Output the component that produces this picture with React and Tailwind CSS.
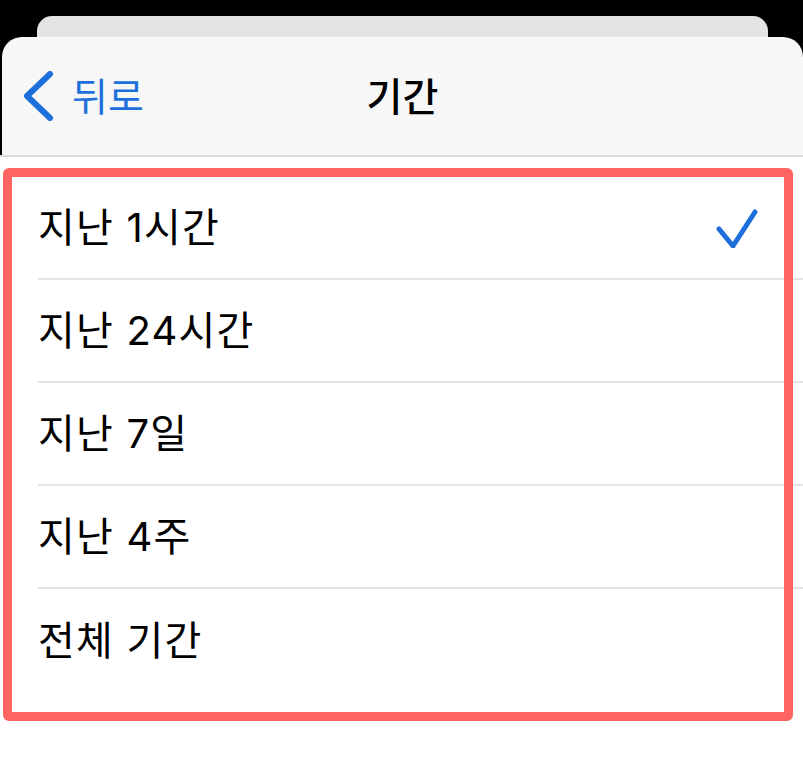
import React from 'react';

const periods = ['지난 1시간', '지난 24시간', '지난 7일', '지난 4주', '전체 기간'];

const App = () => {
  const selected = 0;

  return (
    <div className="relative w-[803px] h-[758px] overflow-hidden bg-white font-['Inter','Noto_Sans_CJK_KR',sans-serif] text-black">
      {/* stacked sheets */}
      <div className="bg-black pt-[16px]">
        <div className="ml-[37px] mr-[35px] h-[21px] rounded-t-[15px] bg-[#e4e4e4]" />
        <div className="ml-[2px] h-[118px] rounded-t-[20px] bg-[#f7f7f7] grid grid-cols-[1fr_auto_1fr] items-center">
          <button type="button" className="flex items-center gap-[18px] pl-[20px] text-[#1d70dc]">
            <svg width="32" height="50" viewBox="0 0 32 50" fill="none">
              <path d="M28 3 L5 25 L28 47" stroke="currentColor" strokeWidth="6" strokeLinecap="round" strokeLinejoin="round" />
            </svg>
            <span className="text-[39px] leading-none">뒤로</span>
          </button>
          <h1 className="text-[39px] leading-none font-medium">기간</h1>
          <div />
        </div>
      </div>
      <div className="h-[2px] bg-[#dcdcdc]" />

      {/* period list */}
      <ul className="pt-[20px]">
        {periods.map((label, i) => (
          <li
            key={label}
            className={`ml-[38px] pr-[45px] h-[103px] flex items-center justify-between ${
              i < periods.length - 1 ? 'border-b-[2px] border-[#e4e4e4]' : ''
            }`}
          >
            <span className="text-[40px] leading-none tracking-[1.2px]">{label}</span>
            {i === selected && (
              <svg width="42" height="40" viewBox="0 0 42 40" fill="none" className="text-[#1d70dc]">
                <path d="M3 21 L17 38 L39 4" stroke="currentColor" strokeWidth="5" strokeLinecap="round" strokeLinejoin="round" />
              </svg>
            )}
          </li>
        ))}
      </ul>

      {/* highlight annotation */}
      <div className="absolute left-[3px] top-[168px] w-[790px] h-[553px] border-[9px] border-[#ff6461] rounded-[6px] pointer-events-none" />
    </div>
  );
};

export default App;
